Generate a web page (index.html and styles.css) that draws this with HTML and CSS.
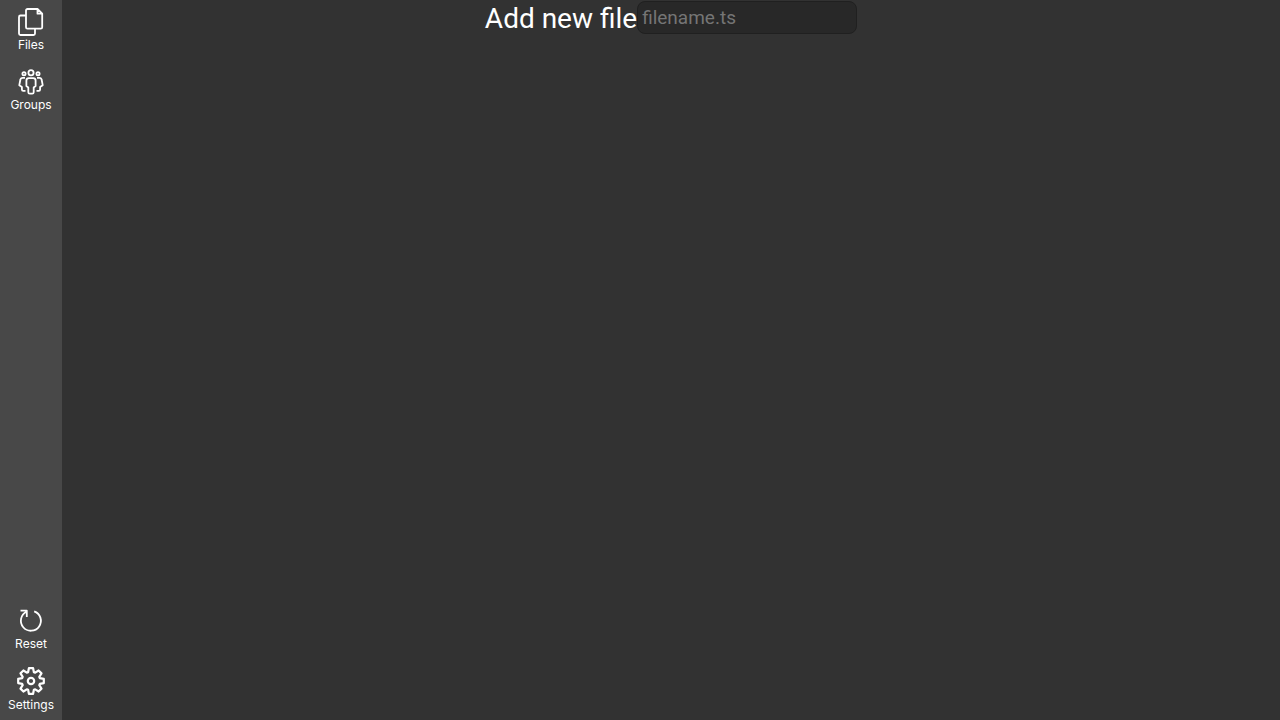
FILE: index.html
```html
<!DOCTYPE html>
<html lang="en">
<head>
<meta charset="utf-8">
<title>Files</title>
<link rel="stylesheet" href="styles.css">
</head>
<body>
<div class="app">
  <nav class="sidebar">
    <div class="group">
      <button class="item" type="button">
        <svg class="icon" viewBox="0 0 28 28"><path d="M9 7.500H3.500A1.500 1.500 0 0 0 2 9V25.500A1.500 1.500 0 0 0 3.500 27H16.500A1.500 1.500 0 0 0 18 25.500V21M10.500 1H20.500L25.200 5.700V19.200A1.500 1.500 0 0 1 23.700 20.700H10.500A1.500 1.500 0 0 1 9 19.200V2.500A1.500 1.500 0 0 1 10.500 1ZM20.500 1V5.700H25"/></svg>
        <span>Files</span>
      </button>
      <button class="item" type="button">
        <svg class="icon" viewBox="0 0 28 28"><circle cx="14" cy="4.800" r="2.600"/><circle cx="7" cy="5.800" r="1.600"/><circle cx="21" cy="5.800" r="1.600"/><path d="M11.800 10.200H16.200Q18.600 10.200 18.600 12.600V18L16.700 19.500V24.200Q16.700 25.700 15.200 25.700H12.800Q11.300 25.700 11.300 24.200V19.500L9.400 18V12.600Q9.400 10.200 11.800 10.200ZM8 9.800H5.700Q3.600 9.800 3.300 12L2.300 17.200L4.900 19V21.500Q4.900 22.800 6.200 22.800H8.500M20 9.800H22.300Q24.400 9.800 24.700 12L25.700 17.200L23.100 19V21.500Q23.100 22.800 21.800 22.800H19.500"/></svg>
        <span>Groups</span>
      </button>
    </div>
    <div class="group">
      <button class="item" type="button">
        <svg class="icon" viewBox="0 0 28 28"><path d="M17.200 4.300A10 10 0 1 1 9.600 4.700M3.500 3.700H9.800V10"/></svg>
        <span>Reset</span>
      </button>
      <button class="item" type="button">
        <svg class="icon gear" viewBox="0 0 28 28"><path d="M11.900 1.200H16.100L16.900 5.200L18.200 5.700L21.600 3.500L24.500 6.400L22.300 9.800L22.800 11.100L26.800 11.900V16.100L22.800 16.900L22.300 18.200L24.500 21.600L21.600 24.500L18.200 22.300L16.900 22.800L16.100 26.800H11.900L11.100 22.800L9.800 22.300L6.400 24.500L3.500 21.600L5.700 18.200L5.200 16.900L1.200 16.100V11.900L5.200 11.100L5.700 9.800L3.500 6.400L6.400 3.500L9.800 5.700L11.100 5.200Z"/><circle cx="14" cy="14" r="3.200"/></svg>
        <span>Settings</span>
      </button>
    </div>
  </nav>
  <main class="content">
    <form class="new-file">
      <label class="title" for="filename">Add new file</label>
      <input class="field" id="filename" type="text" placeholder="filename.ts">
    </form>
  </main>
</div>
</body>
</html>
```
FILE: styles.css
```css
* { box-sizing: border-box; }
body {
  margin: 0;
  background: #323232;
  color: #fff;
  font-family: Inter, "Liberation Sans", sans-serif;
}
.app { display: flex; min-height: 100vh; }
.sidebar {
  display: flex;
  flex-direction: column;
  justify-content: space-between;
  flex: 0 0 62px;
  background: #484848;
}
.group { display: flex; flex-direction: column; }
.item {
  display: flex;
  flex-direction: column;
  align-items: center;
  padding: 8px 0 6px;
  border: 0;
  background: none;
  color: inherit;
  font: 12px/18px Inter, "Liberation Sans", sans-serif;
}
.icon {
  width: 28px;
  height: 28px;
  fill: none;
  stroke: #fff;
  stroke-width: 1.8;
  stroke-linejoin: round;
}
.gear {
  margin-bottom: 1px;
  stroke-width: 2.2;
}
.content { flex: 1; min-width: 0; }
.new-file {
  display: flex;
  justify-content: center;
  align-items: flex-start;
  padding-top: 1px;
}
.title { font: 28px/36px Roboto, "Liberation Sans", sans-serif; }
.field {
  width: 220px;
  height: 33px;
  padding: 0 4px;
  border: 1px solid #202020;
  border-radius: 8px;
  background: #282828;
  color: #fff;
  font: 19px/24px Roboto, "Liberation Sans", sans-serif;
}
.field::placeholder { color: #757575; opacity: 1; }
```
